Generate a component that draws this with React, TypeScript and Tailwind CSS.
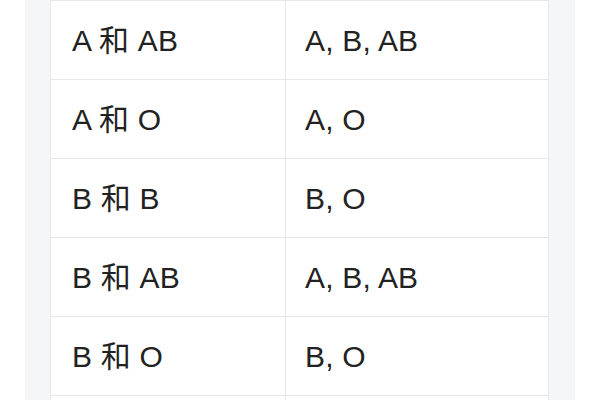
const ROWS: [string, string][] = [
  ["A 和 AB", "A, B, AB"],
  ["A 和 O", "A, O"],
  ["B 和 B", "B, O"],
  ["B 和 AB", "A, B, AB"],
  ["B 和 O", "B, O"],
];

export default function App() {
  return (
    <div
      className="w-[600px] h-[400px] overflow-hidden bg-white px-[25px]"
      style={{ fontFamily: '"Liberation Sans", "Noto Sans CJK SC", sans-serif' }}
    >
      <div className="h-full bg-[#f5f6f8] px-[25px]">
        <div className="w-[499px] bg-white border-x border-t border-[#e6e7e9]">
          {ROWS.map(([parents, child]) => (
            <div key={parents} className="flex h-[79px] border-b border-[#e6e7e9]">
              <div className="w-[235px] shrink-0 flex items-center pl-[21px] pt-[1px] border-r border-[#e6e7e9] text-[30px] tracking-[0.2px] text-[#222]">
                {parents}
              </div>
              <div className="flex-1 flex items-center pl-[19px] pt-[1px] text-[30px] tracking-[0.2px] text-[#222]">
                {child}
              </div>
            </div>
          ))}
          {/* next row, only its top edge is in view */}
          <div className="flex h-[79px]">
            <div className="w-[235px] shrink-0 border-r border-[#e6e7e9]" />
            <div className="flex-1" />
          </div>
        </div>
      </div>
    </div>
  );
}
